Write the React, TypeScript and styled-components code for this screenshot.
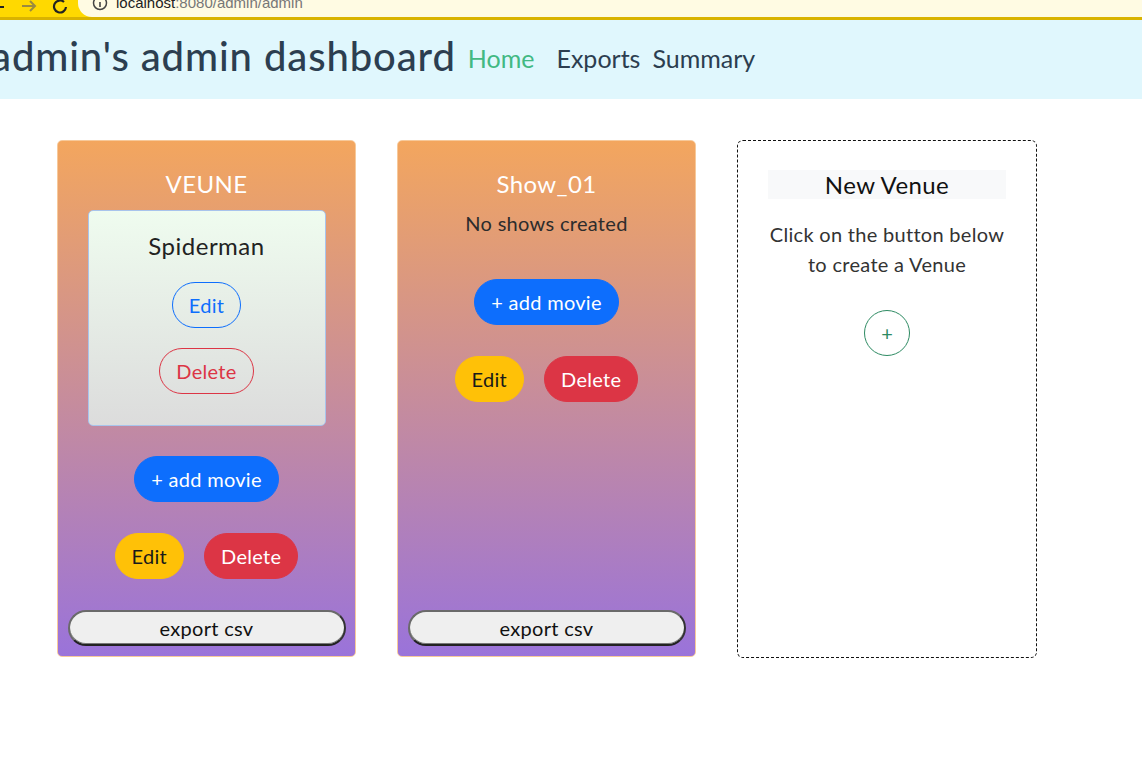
import React from 'react';
import styled, { createGlobalStyle } from 'styled-components';

const GlobalStyle = createGlobalStyle`
  html, body {
    margin: 0;
    padding: 0;
    background: #ffffff;
    font-family: Lato, "Noto Sans", "Liberation Sans", sans-serif;
    color: #2c3e50;
  }
  * { box-sizing: border-box; }
`;

const Chrome = styled.div`
  height: 20px;
  background: #ffd900;
  border-bottom: 3px solid #d9b300;
  display: flex;
  align-items: flex-end;
  overflow: hidden;
`;

const NavIcons = styled.div`
  display: flex;
  align-items: center;
  gap: 14px;
  width: 86px;
  height: 17px;
  margin-left: -8px;
  flex-shrink: 0;
  svg { display: block; }
`;

const UrlPill = styled.div`
  flex: 1;
  height: 17px;
  background: #fffbe3;
  border-radius: 0 0 0 14px;
  display: flex;
  align-items: flex-end;
  padding-left: 14px;
  gap: 8px;
  font-family: "Liberation Sans", Arial, sans-serif;
  font-size: 15px;
  line-height: 17px;
  overflow: hidden;
`;

const Host = styled.span`
  color: #222;
  transform: translateY(-6px);
  span { color: #777; }
`;

const Header = styled.header`
  background: #e0f7fd;
  height: 79px;
  display: flex;
  align-items: center;
  gap: 12px;
  padding-bottom: 8px;
  overflow: hidden;
  white-space: nowrap;
`;

const Title = styled.h1`
  margin: 0 0 0 -9px;
  font-size: 40px;
  font-weight: 500;
  color: #2c3e50;
  letter-spacing: 0.9px;
`;

const NavLink = styled.a<{ $active?: boolean }>`
  font-size: 25px;
  color: ${(p) => (p.$active ? '#42b983' : '#2c3e50')};
  text-decoration: none;
  margin-top: 4px;
  margin-right: ${(p) => (p.$active ? '10px' : '0')};
`;

const Board = styled.main`
  display: flex;
  gap: 41px;
  padding: 41px 0 0 57px;
`;

const Card = styled.section`
  width: 299px;
  height: 517px;
  border-radius: 5px;
  border: 1px solid #f7c99a;
  background: linear-gradient(to bottom, #f3a65e 0%, #9a73da 100%);
  display: flex;
  flex-direction: column;
  align-items: center;
  padding: 27px 10px 10px;
`;

const CardTitle = styled.h2`
  margin: 0;
  font-size: 24px;
  font-weight: 400;
  line-height: 32px;
  letter-spacing: 0.4px;
  color: #ffffff;
`;

const Muted = styled.p`
  margin: 8px 0 0;
  font-size: 20px;
  line-height: 30px;
  letter-spacing: 0.3px;
  color: #2c2c2c;
`;

const MovieBox = styled.div`
  margin-top: 10px;
  width: 238px;
  height: 216px;
  border: 1px solid #a8c4ec;
  border-radius: 5px;
  background: linear-gradient(to bottom, #effcef 0%, #dcdcdc 100%);
  display: flex;
  flex-direction: column;
  align-items: center;
  padding-top: 20px;
`;

const MovieName = styled.h3`
  margin: 0;
  font-size: 24px;
  font-weight: 400;
  line-height: 30px;
  letter-spacing: 0.5px;
  color: #222;
`;

const tones = {
  blue: '#0d6efd',
  red: '#dc3545',
  yellow: '#ffc107',
};

const Pill = styled.button<{ $tone: keyof typeof tones; $outline?: boolean }>`
  font-family: inherit;
  font-size: 20px;
  line-height: 30px;
  letter-spacing: 0.3px;
  height: 46px;
  padding: 0 16px;
  border-radius: 23px;
  cursor: pointer;
  border: 1px solid ${(p) => tones[p.$tone]};
  background: ${(p) => (p.$outline ? 'transparent' : tones[p.$tone])};
  color: ${(p) =>
    p.$outline ? tones[p.$tone] : p.$tone === 'yellow' ? '#1a1a1a' : '#ffffff'};
`;

const Stack = styled.div<{ $gap: number; $top: number }>`
  display: flex;
  flex-direction: column;
  align-items: center;
  gap: ${(p) => p.$gap}px;
  margin-top: ${(p) => p.$top}px;
`;

const Row = styled.div<{ $top: number }>`
  display: flex;
  gap: 20px;
  margin-top: ${(p) => p.$top}px;
`;

const ExportButton = styled.button`
  margin-top: auto;
  width: 278px;
  height: 36px;
  border-radius: 18px;
  background: #efefef;
  border: 2px solid #6a6a6a;
  border-bottom-color: #222;
  border-right-color: #333;
  box-shadow: inset 0 -1px 0 #777;
  font-family: inherit;
  font-size: 20px;
  letter-spacing: 0.3px;
  color: #111;
  cursor: pointer;
  padding: 0;
`;

const NewCard = styled.section`
  width: 300px;
  height: 518px;
  border: 1px dashed #111;
  border-radius: 6px;
  display: flex;
  flex-direction: column;
  align-items: center;
  padding-top: 29px;
`;

const NewTitle = styled.h2`
  margin: 0;
  width: 238px;
  height: 29px;
  background: #f8f9fa;
  font-size: 24px;
  font-weight: 400;
  line-height: 30px;
  letter-spacing: 0.4px;
  color: #111;
  text-align: center;
`;

const Hint = styled.p`
  margin: 20px 0 0;
  width: 240px;
  text-align: center;
  font-size: 20px;
  line-height: 30px;
  letter-spacing: 0.3px;
  color: #333;
`;

const CircleButton = styled.button`
  margin-top: 31px;
  width: 46px;
  height: 46px;
  border-radius: 50%;
  border: 1px solid #2e8b63;
  background: transparent;
  color: #2e8b63;
  font-family: inherit;
  font-size: 20px;
  line-height: 1;
  padding: 0;
  cursor: pointer;
`;

const VenueCard = () => (
  <Card>
    <CardTitle>VEUNE</CardTitle>
    <MovieBox>
      <MovieName>Spiderman</MovieName>
      <Stack $gap={20} $top={21}>
        <Pill $tone="blue" $outline>Edit</Pill>
        <Pill $tone="red" $outline>Delete</Pill>
      </Stack>
    </MovieBox>
    <Stack $gap={0} $top={30}>
      <Pill $tone="blue">+ add movie</Pill>
    </Stack>
    <Row $top={31}>
      <Pill $tone="yellow">Edit</Pill>
      <Pill $tone="red">Delete</Pill>
    </Row>
    <ExportButton>export csv</ExportButton>
  </Card>
);

const ShowCard = () => (
  <Card>
    <CardTitle>Show_01</CardTitle>
    <Muted>No shows created</Muted>
    <Stack $gap={0} $top={41}>
      <Pill $tone="blue">+ add movie</Pill>
    </Stack>
    <Row $top={31}>
      <Pill $tone="yellow">Edit</Pill>
      <Pill $tone="red">Delete</Pill>
    </Row>
    <ExportButton>export csv</ExportButton>
  </Card>
);

export default function App() {
  return (
    <>
      <GlobalStyle />
      <Chrome>
        <NavIcons>
          <svg width="14" height="17" viewBox="0 0 14 17">
            <path d="M0 7h12" stroke="#222" strokeWidth="2" />
          </svg>
          <svg width="18" height="17" viewBox="0 0 18 17">
            <path d="M2 6h13M10 1l5 5-5 5" stroke="#9a8a40" strokeWidth="2" fill="none" />
          </svg>
          <svg width="18" height="17" viewBox="0 0 18 17">
            <path d="M14 7a6 6 0 1 1-2-5" stroke="#222" strokeWidth="2.2" fill="none" />
          </svg>
        </NavIcons>
        <UrlPill>
          <svg width="16" height="17" viewBox="0 0 16 17" style={{ flexShrink: 0 }}>
            <circle cx="8" cy="3" r="6.5" stroke="#444" strokeWidth="1.5" fill="none" />
            <path d="M8 2v5" stroke="#444" strokeWidth="1.6" />
          </svg>
          <Host>
            localhost<span>:8080/admin/admin</span>
          </Host>
        </UrlPill>
      </Chrome>
      <Header>
        <Title>admin's admin dashboard</Title>
        <NavLink $active href="#">Home</NavLink>
        <NavLink href="#">Exports</NavLink>
        <NavLink href="#">Summary</NavLink>
      </Header>
      <Board>
        <VenueCard />
        <ShowCard />
        <NewCard>
          <NewTitle>New Venue</NewTitle>
          <Hint>Click on the button below to create a Venue</Hint>
          <CircleButton>+</CircleButton>
        </NewCard>
      </Board>
    </>
  );
}
